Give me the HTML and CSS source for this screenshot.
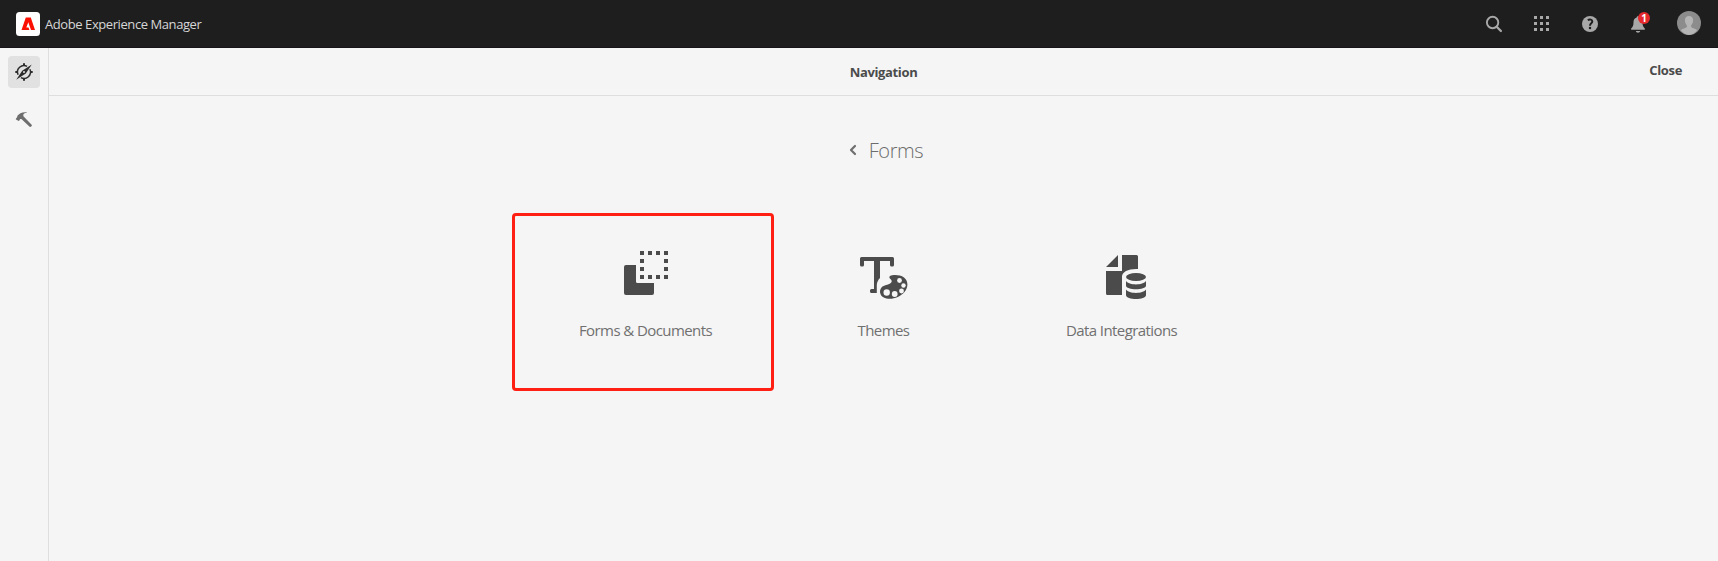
FILE: index.html
```html
<!DOCTYPE html>
<html lang="en">
<head>
<meta charset="utf-8">
<title>Adobe Experience Manager</title>
<link rel="stylesheet" href="styles.css">
</head>
<body>
<header class="shell">
  <div class="brand">
    <svg class="logo" width="24" height="24" viewBox="0 0 24 24"><rect width="24" height="24" rx="3.500" fill="#fff"/><path fill="#fa0f00" d="M9.800 5.500h5L19 18h-4l-2.700-7.800-2 5.300h2.200l.9 2.500H5.500z"/></svg>
    <span class="brand-name">Adobe Experience Manager</span>
  </div>
  <nav class="actions">
    <svg class="action" width="18" height="18" viewBox="0 0 18 18"><circle cx="7.600" cy="7.500" r="5.700" fill="none" stroke="#a8a8a8" stroke-width="1.900"/><path d="M11.700 11.700l4.200 4.300" stroke="#a8a8a8" stroke-width="2.300" stroke-linecap="round"/></svg>
    <svg class="action" width="18" height="18" viewBox="0 0 18 18"><path fill="#a8a8a8" d="M1 1h3v3H1zM7 1h3v3H7zM13 1h3v3h-3zM1 7h3v3H1zM7 7h3v3H7zM13 7h3v3h-3zM1 13h3v3H1zM7 13h3v3H7zM13 13h3v3h-3z"/></svg>
    <svg class="action" width="18" height="18" viewBox="0 0 18 18"><circle cx="9" cy="9" r="8" fill="#a8a8a8"/><path d="M6.800 5.200c2-1.300 4.500-.7 4.500 1.300C11.300 8.300 9 8.300 9 10.700" fill="none" stroke="#1e1e1e" stroke-width="2"/><circle cx="9" cy="13" r="1.250" fill="#1e1e1e"/></svg>
    <div class="action bell">
      <svg width="18" height="18" viewBox="0 0 18 18"><path fill="#a8a8a8" d="M9 1.200c.8 0 1.300.5 1.300 1.200 2.400.6 3.200 2.500 3.200 4.900 0 3.300.7 4.700 2.300 6.300.4.500.2 1.200-.4 1.200H2.600c-.6 0-.8-.7-.4-1.200 1.600-1.600 2.300-3 2.300-6.300 0-2.400.8-4.300 3.200-4.900 0-.7.500-1.200 1.300-1.200zM6.800 16h4.400c-.3 1-1.100 1.700-2.200 1.700S7.100 17 6.800 16z"/></svg>
      <span class="badge">1</span>
    </div>
    <svg class="avatar" width="24" height="24" viewBox="0 0 24 24"><circle cx="12" cy="12" r="12" fill="#8c8c8c"/><path fill="#b5b5b5" d="M12 5c2.700 0 4.100 1.700 4.100 4.300 0 2.200-.8 3.600-1.700 4.700-.6.800-.5 2 .4 2.600 1.800 1 4.100 1.400 5.300 2.600A11.900 11.900 0 0 1 12 24a11.900 11.900 0 0 1-8.100-4.800c1.200-1.200 3.500-1.600 5.300-2.600.9-.6 1-1.800.4-2.600-.9-1.100-1.700-2.500-1.700-4.700C7.900 6.700 9.300 5 12 5z"/></svg>
  </nav>
</header>
<div class="workspace">
  <aside class="rail">
    <div class="rail-item selected">
      <svg width="18" height="18" viewBox="0 0 18 18"><g fill="none" stroke="#2c2c2c" stroke-width="1.500"><path d="M3.100 11.700a6.500 6.500 0 0 1 9-8.400M14.900 6.300a6.500 6.500 0 0 1-9 8.400"/><path stroke-width="2" d="M9 .3v2.200M9 15.500v2.200M.3 9h2.200M15.500 9h2.200"/></g><path fill="#2c2c2c" fill-rule="evenodd" d="M16.800 1.600L10.800 10.600 1.200 16.700 7.200 7.700zM9 8.100a1 1 0 1 0 0 2 1 1 0 0 0 0-2z"/></svg>
    </div>
    <div class="rail-item">
      <svg width="18" height="18" viewBox="0 0 18 18"><path fill="#6e6e6e" d="M.9 7.800L2.200 6l.2-1.200C4.200 2.500 6.600.9 11.500 1.200c.5 0 .5.500.1.600-2 .4-3.100 1-3.300 2.100l.1 1.300 8.500 8.800c.5.500-1.500 2.500-2 2L6.400 7.900l-1.300.1-.7 1.500-.6.400L1 8.500c-.3-.2-.3-.4-.1-.7z"/></svg>
    </div>
  </aside>
  <main class="panel">
    <div class="panel-header">
      <span class="panel-title">Navigation</span>
      <span class="close">Close</span>
    </div>
    <div class="crumb">
      <svg width="8" height="12" viewBox="0 0 8 12"><path d="M6 2L2 6l4 4" fill="none" stroke="#6e6e6e" stroke-width="2.200" stroke-linecap="round" stroke-linejoin="round"/></svg>
      <span class="crumb-text">Forms</span>
    </div>
    <div class="tiles">
      <div class="tile highlighted">
        <svg width="48" height="48" viewBox="0 0 48 48" fill="#4b4b4b"><path d="M4 16h10v16.500a1.500 1.500 0 0 0 1.500 1.500H32v10a2 2 0 0 1-2 2H4a2 2 0 0 1-2-2V18a2 2 0 0 1 2-2z"/><path d="M18 2h4v4h-4zM26 2h4v4h-4zM34 2h4v4h-4zM42 2h4v4h-4zM18 10h4v4h-4zM42 10h4v4h-4zM18 18h4v4h-4zM42 18h4v4h-4zM18 26h4v4h-4zM26 26h4v4h-4zM34 26h4v4h-4zM42 26h4v4h-4z"/></svg>
        <span class="label">Forms &amp; Documents</span>
      </div>
      <div class="tile">
        <svg width="48" height="48" viewBox="0 0 48 48" fill="#4b4b4b"><path d="M1.500 8h31A1.500 1.500 0 0 1 34 9.500V16a1.500 1.500 0 0 1-1.500 1.500h-1A1.500 1.500 0 0 1 30 16v-4H20v17c-2 2-3.200 4.500-3.200 7.500V44H11.500a1.500 1.500 0 0 1-1.500-1.500V41.500A1.500 1.500 0 0 1 11.500 40H14V12H4v4a1.500 1.500 0 0 1-1.500 1.500h-1A1.500 1.500 0 0 1 0 16V9.500A1.500 1.500 0 0 1 1.500 8z"/><path stroke="#f5f5f5" stroke-width="3" paint-order="stroke" d="M30 27c3-1.500 10-1.500 14 1.500 4.500 3.500 4.500 10 .5 14.500-4.300 4.800-11.500 7.800-18 6.500-6.500-1.200-8-7.500-5-11 2.500-3 6.500-2 9.300-4.500 2-1.800.5-3-.9-4.500-.8-.9-.6-2 .1-2.500z"/><g fill="#f5f5f5"><circle cx="39.500" cy="31.500" r="2.400"/><circle cx="43.500" cy="36.500" r="2.200"/><circle cx="41.500" cy="42" r="2.400"/><circle cx="34.700" cy="45" r="2.900"/><circle cx="26.700" cy="43.500" r="3.200"/></g></svg>
        <span class="label">Themes</span>
      </div>
      <div class="tile">
        <svg width="48" height="48" viewBox="0 0 48 48" fill="#4b4b4b"><path d="M8 18L20 6v12zM24 6h14.500A1.500 1.500 0 0 1 40 7.500V20c-9-.5-16 2.500-16 7.500v18.500H9.500A1.500 1.500 0 0 1 8 44.500V22h16z"/><ellipse cx="38" cy="28" rx="10" ry="4"/><path d="M28 32c3 4.500 17 4.500 20 0v4.500c0 5-20 5-20 0zM28 40.500c3 4.500 17 4.500 20 0v5.500c0 5.300-20 5.300-20 0z"/></svg>
        <span class="label">Data Integrations</span>
      </div>
    </div>
  </main>
</div>
</body>
</html>
```
FILE: styles.css
```css
*, *::after { box-sizing: border-box; }
body {
  margin: 0;
  height: 561px;
  overflow: hidden;
  display: flex;
  flex-direction: column;
  background: #f5f5f5;
  font-family: "Open Sans", "Noto Sans", sans-serif;
}
svg { display: block; flex: none; overflow: visible; }
.shell {
  flex: none;
  height: 48px;
  padding: 0 17px 0 16px;
  display: flex;
  align-items: center;
  justify-content: space-between;
  background: #1e1e1e;
  border-bottom: 1px solid #181518;
}
.brand { display: flex; align-items: center; gap: 5px; }
.brand-name {
  color: #d6d6d6;
  font-size: 13px;
  letter-spacing: -0.42px;
  line-height: 20px;
  white-space: nowrap;
}
.actions { display: flex; align-items: center; }
.action { margin-right: 30px; }
.bell { position: relative; }
.avatar { margin-bottom: 1px; }
.badge {
  position: absolute;
  left: 9px;
  top: -3px;
  width: 12px;
  height: 12px;
  border-radius: 50%;
  background: #e4282b;
  color: #fff;
  font-size: 10px;
  font-weight: 700;
  line-height: 12px;
  text-align: center;
}
.workspace { flex: 1; display: flex; }
.rail {
  width: 49px;
  padding: 8px;
  display: flex;
  flex-direction: column;
  gap: 16px;
  border-right: 1px solid #dedede;
}
.rail-item {
  width: 32px;
  height: 32px;
  display: flex;
  align-items: center;
  justify-content: center;
  border-radius: 4px;
}
.selected { background: #e1e1e1; }
.panel { flex: 1; display: flex; flex-direction: column; align-items: center; }
.panel-header {
  width: 100%;
  height: 48px;
  display: grid;
  grid-template-columns: 1fr auto 1fr;
  align-items: center;
  border-bottom: 1px solid #dedede;
  color: #4b4b4b;
  font-size: 13px;
  font-weight: 700;
  letter-spacing: -0.35px;
  line-height: 20px;
}
.panel-title { grid-column: 2; }
.close { justify-self: end; padding: 0 36px 3px 0; }
.crumb {
  height: 28px;
  margin: 41px 0 0 5px;
  display: flex;
  align-items: center;
  gap: 12px;
  color: #6c6c6c;
}
.crumb svg { margin-bottom: 2px; }
.crumb-text { font-size: 20px; font-weight: 300; letter-spacing: -0.4px; line-height: 28px; }
.tiles { display: grid; grid-template-columns: repeat(3, 238px); margin-top: 48px; }
.tile {
  position: relative;
  height: 178px;
  padding-top: 36px;
  display: flex;
  flex-direction: column;
  align-items: center;
  color: #707070;
}
.highlighted::after {
  content: "";
  position: absolute;
  left: -15px;
  top: 0;
  width: 262px;
  height: 178px;
  border: 3px solid #ff1f13;
  border-radius: 4px;
}
.label {
  margin-top: 21px;
  font-size: 15px;
  letter-spacing: -0.58px;
  line-height: 24px;
  white-space: nowrap;
}
```
